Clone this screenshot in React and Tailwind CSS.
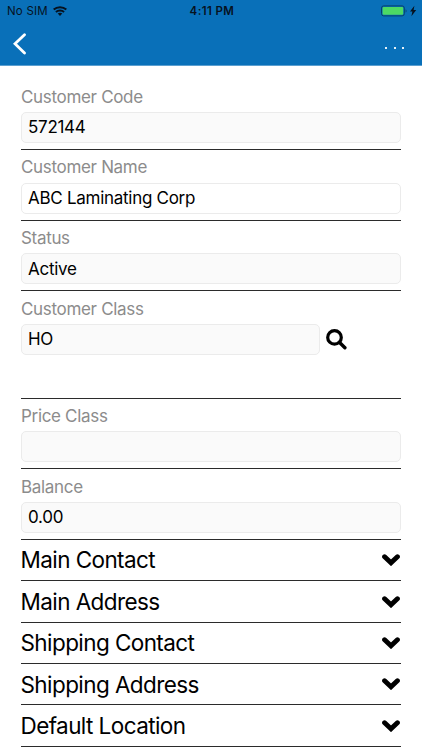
const FIELDS = [
  { label: 'Customer Code', value: '572144' },
  { label: 'Customer Name', value: 'ABC Laminating Corp', editable: true },
  { label: 'Status', value: 'Active' },
  { label: 'Customer Class', value: 'HO', lookup: true },
  { label: 'Price Class', value: '' },
  { label: 'Balance', value: '0.00' },
];

const SECTIONS = [
  'Main Contact',
  'Main Address',
  'Shipping Contact',
  'Shipping Address',
  'Default Location',
];

function StatusBar() {
  return (
    <div className="grid h-[22px] grid-cols-3 items-center pl-[7px] pr-[5px] pt-px text-[#06121f]">
      <div className="flex items-center gap-[5px]">
        <span className="text-[11.5px] tracking-[0.2px]">No SIM</span>
        <svg className="-mt-px h-[10px] w-[14px]" viewBox="0 0 14 10" fill="none" stroke="currentColor">
          <path d="M0.7 3.6C4.2 0.3 9.8 0.3 13.3 3.6" strokeWidth="2" />
          <path d="M2.9 6C5.2 3.9 8.8 3.9 11.1 6" strokeWidth="1.9" />
          <path d="M7 9.9L4.7 7.6C6 6.5 8 6.5 9.3 7.6Z" fill="currentColor" stroke="none" />
        </svg>
      </div>
      <span className="text-center text-[11.5px] font-semibold tracking-[0.4px]">4:11 PM</span>
      <div className="flex items-center justify-end">
        <svg className="-mt-px h-[12px] w-[36px]" viewBox="0 0 36 12">
          <rect x="0.5" y="0.9" width="22.8" height="10" rx="2.2" fill="none" stroke="#07406b" />
          <rect x="1.6" y="2" width="20.6" height="7.8" rx="1" fill="#4cd964" />
          <path d="M24.6 4.2C25.9 4.7 25.9 7.1 24.6 7.6Z" fill="#07406b" />
          <path d="M33.4 0.8L29 6.5H31.4L30.4 11.2L35.2 5.1H32.6Z" fill="#06121f" />
        </svg>
      </div>
    </div>
  );
}

function Header() {
  return (
    <header className="h-[66px] border-b border-[#5b9fd0] bg-[#0970b9]">
      <StatusBar />
      <div className="flex h-[43px] items-center justify-between pl-[13px] pr-[18px]">
        <button aria-label="Back">
          <svg className="h-[22px] w-[14px]" viewBox="0 0 14 22" fill="none">
            <path d="M11.5 1.7L2 10.8L11.5 20" stroke="#fff" strokeWidth="2.8" strokeLinecap="round" />
          </svg>
        </button>
        <button aria-label="More" className="flex gap-[6.5px] pt-[8px]">
          {[0, 1, 2].map((i) => (
            <span key={i} className="size-[2px] bg-white/90" />
          ))}
        </button>
      </div>
    </header>
  );
}

function SearchIcon() {
  return (
    <svg className="size-[21px] text-black" viewBox="0 0 21 21" fill="none" stroke="currentColor">
      <circle cx="8.5" cy="8.4" r="6.8" strokeWidth="3.2" />
      <path d="M13.6 13.5L18.9 18.8" strokeWidth="3.4" strokeLinecap="round" />
    </svg>
  );
}

function Field({ label, value, editable, lookup }) {
  return (
    <div className={`border-b border-[#2b2b2b] ${lookup ? 'h-[107.3px]' : 'h-[70.7px]'}`}>
      <div className="flex h-[32.7px] items-center pt-[3.5px] text-[17px] tracking-[-0.32px] text-[#8c8c8c]">{label}</div>
      <div className="flex items-center gap-[6px]">
        <div
          className={`flex h-[31px] items-center rounded-[5px] border border-[#ebebeb] px-[6px] pt-px text-[17px] tracking-[-0.28px] text-black ${
            editable ? 'bg-white' : 'bg-[#fafafa]'
          } ${lookup ? 'w-[299px]' : 'w-full'}`}
        >
          {value}
        </div>
        {lookup && <SearchIcon />}
      </div>
    </div>
  );
}

function Section({ title }) {
  return (
    <div className="flex h-[41.4px] items-center justify-between border-b border-[#2b2b2b] pr-[1.5px] text-black">
      <h2 className="-ml-[0.5px] pt-[0.5px] text-[22.5px] tracking-[-0.58px]">{title}</h2>
      <svg className="h-[12px] w-[18px]" viewBox="0 0 18 12" fill="none">
        <path d="M2.6 2.8L9 8.8L15.4 2.8" stroke="currentColor" strokeWidth="4.9" strokeLinecap="round" />
      </svg>
    </div>
  );
}

export default function App() {
  return (
    <div className="h-[750px] overflow-hidden bg-white font-['Inter','Liberation_Sans',sans-serif]">
      <Header />
      <main className="px-[21px] pt-[13.2px]">
        {FIELDS.map((f) => (
          <Field key={f.label} {...f} />
        ))}
        {SECTIONS.map((title) => (
          <Section key={title} title={title} />
        ))}
      </main>
    </div>
  );
}
